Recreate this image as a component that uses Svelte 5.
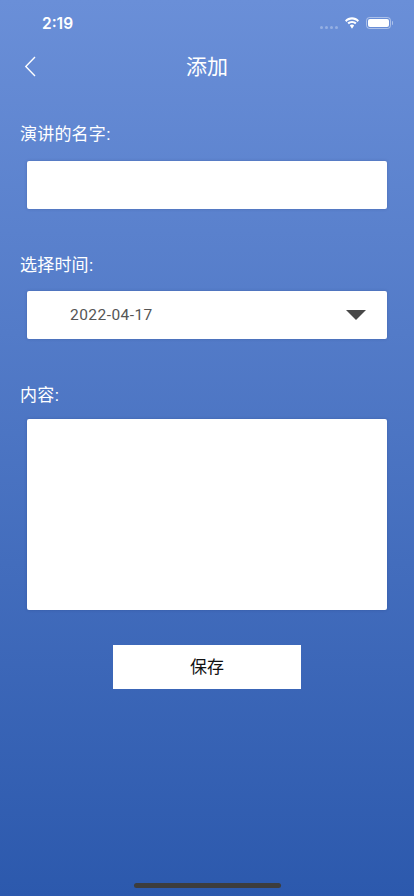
<script lang="ts">
	let title = $state('');
	let date = $state('2022-04-17');
	let content = $state('');
</script>

<div class="page">
	<div class="status">
		<span class="time">2:19</span>
		<div class="status__icons">
			<span class="dots"><i></i><i></i><i></i><i></i></span>
			<svg class="wifi" width="16" height="12" viewBox="0 0 16 12" aria-hidden="true">
				<path d="M8 2.600c2.200 0 4.100.9 5.500 2.300l1.500-1.500C13.200 1.500 10.700.3 8 .3S2.800 1.500 1 3.400l1.500 1.500C3.900 3.500 5.800 2.600 8 2.600z" fill="#fff" />
				<path d="M8 6c1.200 0 2.300.5 3.100 1.300l1.500-1.500C11.400 4.600 9.800 3.900 8 3.900s-3.400.7-4.600 1.900l1.500 1.500C5.700 6.500 6.800 6 8 6z" fill="#fff" />
				<path d="M8 7.500c-.9 0-1.600.3-2.100.9L8 11.700l2.100-3.300c-.5-.6-1.200-.9-2.100-.9z" fill="#fff" />
			</svg>
			<span class="battery"><span class="battery__fill"></span></span>
			<span class="battery__cap"></span>
		</div>
	</div>

	<header class="nav">
		<button class="back" aria-label="返回">
			<svg width="14" height="23" viewBox="0 0 14 23" aria-hidden="true">
				<path d="M11 2 1.800 11.500 11 21" fill="none" stroke="#fff" stroke-width="1.400" />
			</svg>
		</button>
		<h1>添加</h1>
	</header>

	<form class="form" onsubmit={(e) => e.preventDefault()}>
		<label class="label label--first" for="title">演讲的名字:</label>
		<input id="title" class="box box--input" bind:value={title} />

		<label class="label label--time" for="date">选择时间:</label>
		<div id="date" class="box box--select">
			<span>{date}</span>
			<svg width="20" height="10" viewBox="0 0 20 10" aria-hidden="true">
				<path d="M0 0h20L10 10z" fill="#484848" />
			</svg>
		</div>

		<label class="label label--content" for="content">内容:</label>
		<textarea id="content" class="box box--area" bind:value={content}></textarea>

		<button class="save" type="submit"><span>保存</span></button>
	</form>

	<div class="home"></div>
</div>

<style>
	:global(body) {
		margin: 0;
	}
	.page {
		position: relative;
		width: 414px;
		height: 896px;
		overflow: hidden;
		display: flex;
		flex-direction: column;
		background: linear-gradient(180deg, #6a8fd8 0%, #2c59ad 100%);
		font-family: 'Liberation Sans', 'Noto Sans CJK SC', sans-serif;
		color: #fff;
	}
	.status {
		height: 44px;
		flex: none;
		display: flex;
		justify-content: space-between;
		align-items: center;
		padding: 2px 21px 0 42px;
		box-sizing: border-box;
	}
	.time {
		font-family: Inter, sans-serif;
		font-size: 15.500px;
		font-weight: 600;
	}
	.status__icons {
		display: flex;
		align-items: center;
	}
	.dots {
		display: flex;
		gap: 2px;
		margin: 8px 6px 0 0;
	}
	.dots i {
		width: 3px;
		height: 3px;
		border-radius: 50%;
		background: rgba(255, 255, 255, 0.3);
	}
	.wifi {
		margin-right: 6px;
	}
	.battery {
		width: 25px;
		height: 12px;
		box-sizing: border-box;
		border: 1px solid rgba(255, 255, 255, 0.45);
		border-radius: 3.500px;
		padding: 1px;
		display: flex;
	}
	.battery__fill {
		flex: 1;
		background: #fff;
		border-radius: 2px;
	}
	.battery__cap {
		width: 1.500px;
		height: 4px;
		margin-left: 1px;
		background: rgba(255, 255, 255, 0.45);
		border-radius: 0 1px 1px 0;
	}
	.nav {
		position: relative;
		height: 44px;
		flex: none;
		display: flex;
		align-items: center;
		justify-content: center;
	}
	.nav h1 {
		margin: -3px 0 0;
		font-size: 21px;
		font-weight: 400;
	}
	.back {
		position: absolute;
		left: 24px;
		top: 11px;
		padding: 0;
		border: 0;
		background: none;
		display: flex;
	}
	.form {
		display: flex;
		flex-direction: column;
		padding: 0 27px 0 20px;
	}
	.label {
		font-size: 17px;
		line-height: 22px;
		letter-spacing: 0.2px;
	}
	.label--first {
		margin-top: 36px;
	}
	.label--time {
		margin-top: 46px;
	}
	.label--content {
		margin-top: 46px;
	}
	.box {
		display: block;
		box-sizing: border-box;
		width: 360px;
		margin: 15px 0 0 7px;
		padding: 0;
		border: 0;
		outline: 0;
		border-radius: 2px;
		background: #fff;
		box-shadow: 0 0 3px rgba(30, 50, 110, 0.3);
		resize: none;
	}
	.box--input,
	.box--select {
		height: 48px;
	}
	.box--select {
		display: flex;
		align-items: center;
		justify-content: space-between;
		margin-top: 14px;
		padding: 0 21px 0 43px;
		color: #555;
		font-family: Roboto, sans-serif;
		font-size: 15.500px;
		letter-spacing: 0.45px;
	}
	.box--area {
		height: 191px;
		margin-top: 12px;
	}
	.save {
		width: 188px;
		height: 44px;
		margin: 35px 0 0 93px;
		padding: 0 0 3px;
		border: 0;
		background: #fff;
		color: #111;
		font-family: inherit;
		font-size: 17px;
	}
	.home {
		position: absolute;
		left: 134px;
		bottom: 8px;
		width: 147px;
		height: 5px;
		border-radius: 3px;
		background: #3d3d3d;
	}
</style>
